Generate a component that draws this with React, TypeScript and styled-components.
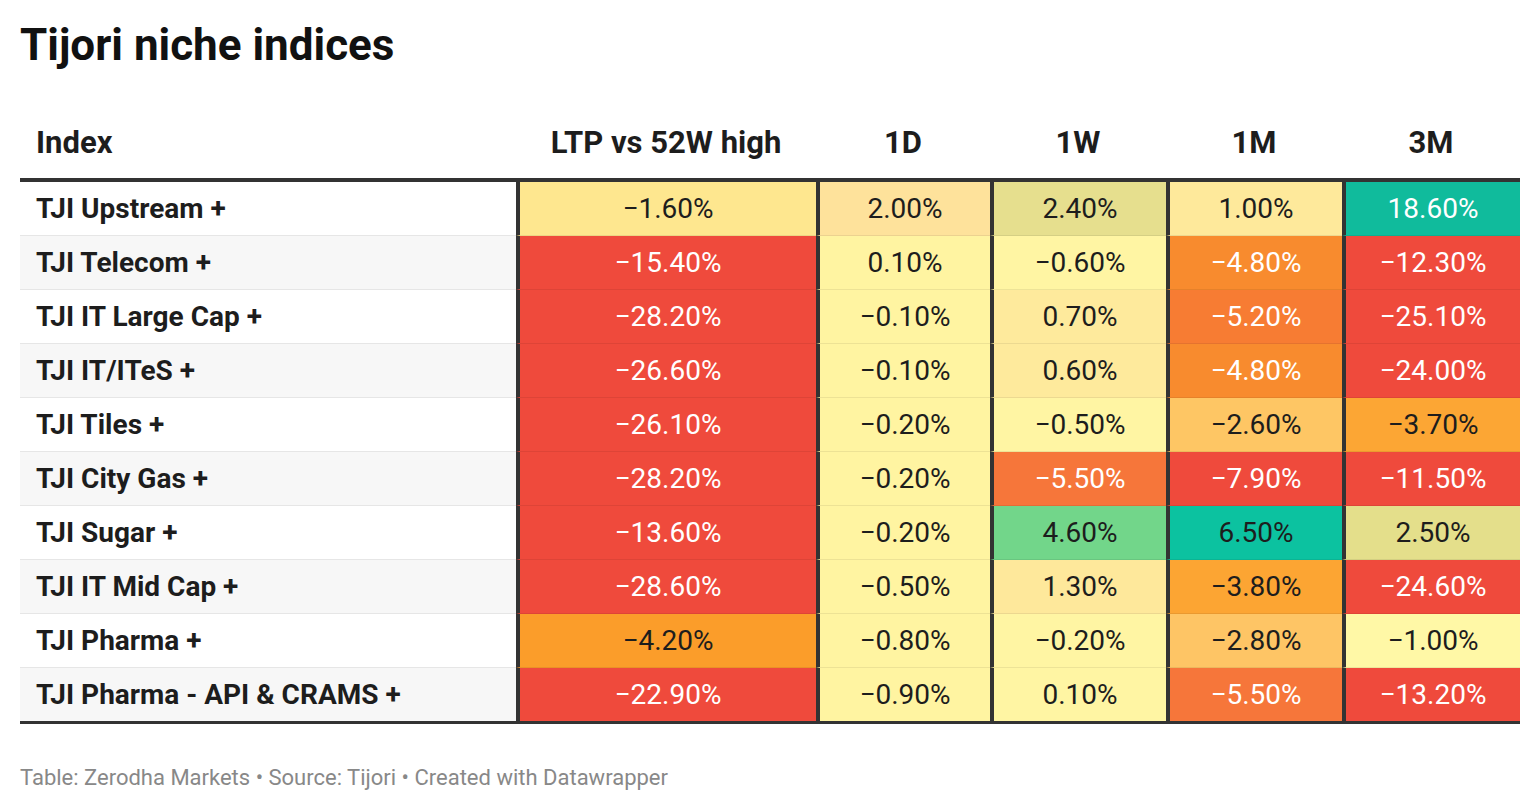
import React from 'react';
import styled, { createGlobalStyle } from 'styled-components';

const GlobalStyle = createGlobalStyle`
  body {
    margin: 0;
    background: #fff;
    font-family: Roboto, "Liberation Sans", Arial, sans-serif;
  }
`;

const RED = '#ef4a3c';
const PALE = '#fff4a1';

type Cell = [string, string, boolean?];

interface Row {
  name: string;
  cells: Cell[];
}

const rows: Row[] = [
  {
    name: 'TJI Upstream +',
    cells: [
      ['−1.60%', '#fee78f'],
      ['2.00%', '#fee29b'],
      ['2.40%', '#e6df8e'],
      ['1.00%', '#fee99b'],
      ['18.60%', '#10bb9c', true],
    ],
  },
  {
    name: 'TJI Telecom +',
    cells: [
      ['−15.40%', RED, true],
      ['0.10%', PALE],
      ['−0.60%', '#fff5a3'],
      ['−4.80%', '#f88b2e', true],
      ['−12.30%', RED, true],
    ],
  },
  {
    name: 'TJI IT Large Cap +',
    cells: [
      ['−28.20%', RED, true],
      ['−0.10%', PALE],
      ['0.70%', '#feea9c'],
      ['−5.20%', '#f77c33', true],
      ['−25.10%', RED, true],
    ],
  },
  {
    name: 'TJI IT/ITeS +',
    cells: [
      ['−26.60%', RED, true],
      ['−0.10%', PALE],
      ['0.60%', '#feea9c'],
      ['−4.80%', '#f88b2e', true],
      ['−24.00%', RED, true],
    ],
  },
  {
    name: 'TJI Tiles +',
    cells: [
      ['−26.10%', RED, true],
      ['−0.20%', PALE],
      ['−0.50%', '#fff5a3'],
      ['−2.60%', '#fec664'],
      ['−3.70%', '#fca634'],
    ],
  },
  {
    name: 'TJI City Gas +',
    cells: [
      ['−28.20%', RED, true],
      ['−0.20%', PALE],
      ['−5.50%', '#f6763a', true],
      ['−7.90%', RED, true],
      ['−11.50%', RED, true],
    ],
  },
  {
    name: 'TJI Sugar +',
    cells: [
      ['−13.60%', RED, true],
      ['−0.20%', PALE],
      ['4.60%', '#72d68a'],
      ['6.50%', '#0cc2a0'],
      ['2.50%', '#e4df8b'],
    ],
  },
  {
    name: 'TJI IT Mid Cap +',
    cells: [
      ['−28.60%', RED, true],
      ['−0.50%', PALE],
      ['1.30%', '#fee89b'],
      ['−3.80%', '#fca533'],
      ['−24.60%', RED, true],
    ],
  },
  {
    name: 'TJI Pharma +',
    cells: [
      ['−4.20%', '#fb9d2a'],
      ['−0.80%', PALE],
      ['−0.20%', '#fff5a3'],
      ['−2.80%', '#fec565'],
      ['−1.00%', '#fff8a6'],
    ],
  },
  {
    name: 'TJI Pharma - API & CRAMS +',
    cells: [
      ['−22.90%', RED, true],
      ['−0.90%', PALE],
      ['0.10%', '#fff5a3'],
      ['−5.50%', '#f6763a', true],
      ['−13.20%', RED, true],
    ],
  },
];

const columns = ['LTP vs 52W high', '1D', '1W', '1M', '3M'];

export default function App() {
  return (
    <>
      <GlobalStyle />
      <Page>
        <Title>Tijori niche indices</Title>
        <Table>
          <HeadRow>
            <HeadCell>Index</HeadCell>
            {columns.map((c) => (
              <HeadCell key={c} $center>
                {c}
              </HeadCell>
            ))}
          </HeadRow>
          <Body>
            {rows.map((row, i) => (
              <BodyRow key={row.name}>
                <NameCell $alt={i % 2 === 1} $last={i === rows.length - 1}>
                  {row.name}
                </NameCell>
                {row.cells.map(([text, bg, light], j) => (
                  <ValueCell
                    key={j}
                    $bg={bg}
                    $light={!!light}
                    $last={i === rows.length - 1}
                  >
                    {text}
                  </ValueCell>
                ))}
              </BodyRow>
            ))}
          </Body>
        </Table>
        <Footer>
          Table: Zerodha Markets • Source: Tijori • Created with Datawrapper
        </Footer>
      </Page>
    </>
  );
}

const grid = `
  display: grid;
  grid-template-columns: 496px 300px 174px 176px 176px 178px;
`;

const Page = styled.div`
  width: 1500px;
  padding: 19px 20px 0;
`;

const Title = styled.h1`
  margin: 0;
  font-size: 44px;
  line-height: 52px;
  font-weight: 700;
  color: #111;
`;

const Table = styled.div`
  margin-top: 54px;
`;

const HeadRow = styled.div`
  ${grid}
  padding-bottom: 17px;
`;

const HeadCell = styled.div<{ $center?: boolean }>`
  font-size: 31px;
  line-height: 36px;
  font-weight: 700;
  color: #1d1d1d;
  text-align: ${({ $center }) => ($center ? 'center' : 'left')};
  padding-left: ${({ $center }) => ($center ? '0' : '16px')};
`;

const Body = styled.div`
  border-top: 4px solid #333;
  border-bottom: 3px solid #333;
`;

const BodyRow = styled.div`
  ${grid}
`;

const NameCell = styled.div<{ $alt: boolean; $last: boolean }>`
  box-sizing: border-box;
  height: ${({ $last }) => ($last ? '53px' : '54px')};
  display: flex;
  align-items: center;
  padding-left: 16px;
  background: ${({ $alt }) => ($alt ? '#f7f7f7' : '#fff')};
  border-bottom: ${({ $last }) => ($last ? 'none' : '1px solid #e6e6e6')};
  font-size: 28px;
  font-weight: 700;
  color: #1d1d1d;
`;

const ValueCell = styled.div<{ $bg: string; $light: boolean; $last: boolean }>`
  box-sizing: border-box;
  height: ${({ $last }) => ($last ? '53px' : '54px')};
  display: flex;
  align-items: center;
  justify-content: center;
  background: ${({ $bg }) => $bg};
  border-left: 4px solid #333;
  border-bottom: ${({ $last }) =>
    $last ? 'none' : '1px solid rgba(0, 0, 0, 0.07)'};
  font-size: 28px;
  font-weight: 400;
  color: ${({ $light }) => ($light ? '#fff' : '#1d1d1d')};
`;

const Footer = styled.div`
  margin-top: 41px;
  font-size: 22px;
  line-height: 26px;
  color: #888;
`;
